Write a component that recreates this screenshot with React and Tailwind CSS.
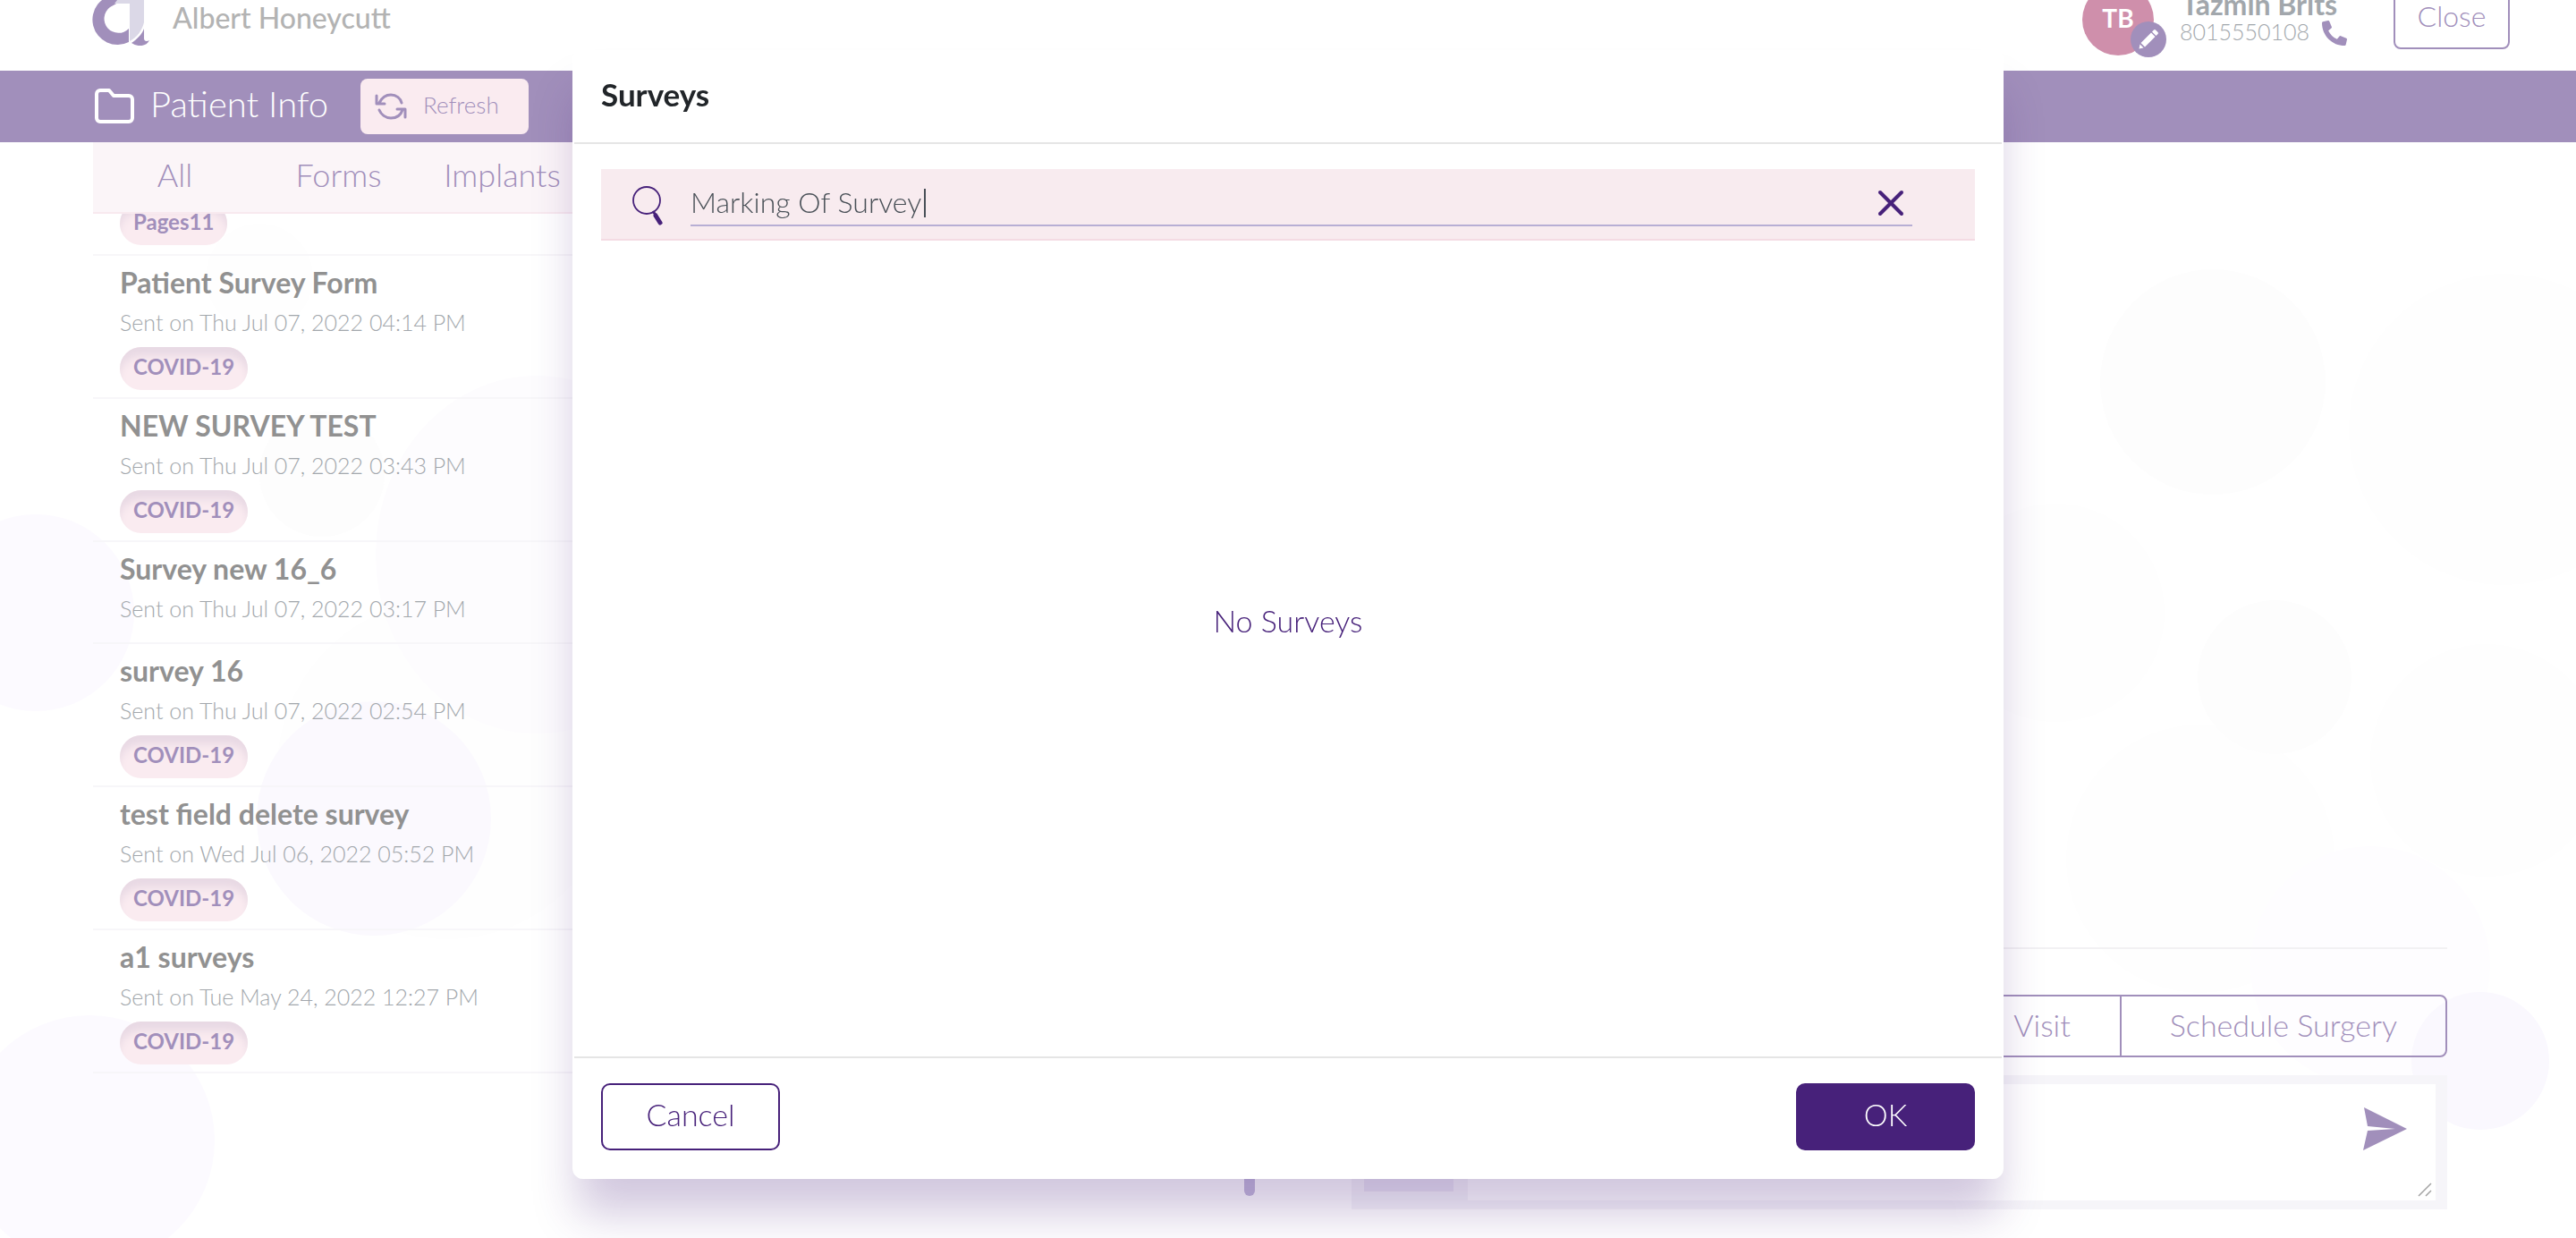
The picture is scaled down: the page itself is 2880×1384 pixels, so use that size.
import { X } from "lucide-react";
import { FaPhoneAlt } from "react-icons/fa";

const surveys = [
  { title: "Patient Survey Form", sent: "Sent on Thu Jul 07, 2022 04:14 PM", tag: "COVID-19" },
  { title: "NEW SURVEY TEST", sent: "Sent on Thu Jul 07, 2022 03:43 PM", tag: "COVID-19" },
  { title: "Survey new 16_6", sent: "Sent on Thu Jul 07, 2022 03:17 PM" },
  { title: "survey 16", sent: "Sent on Thu Jul 07, 2022 02:54 PM", tag: "COVID-19" },
  { title: "test field delete survey", sent: "Sent on Wed Jul 06, 2022 05:52 PM", tag: "COVID-19" },
  { title: "a1 surveys", sent: "Sent on Tue May 24, 2022 12:27 PM", tag: "COVID-19" },
];

function Backdrop() {
  return (
    <svg className="absolute inset-0 -z-10 h-full w-full" viewBox="0 0 2880 1384" preserveAspectRatio="xMidYMid slice" aria-hidden="true">
      <g fill="#fefefe">
        <circle cx="2800" cy="480" r="174" />
        <circle cx="2298" cy="685" r="122" />
        <circle cx="2460" cy="960" r="150" />
        <circle cx="2780" cy="850" r="130" />
        <circle cx="290" cy="310" r="60" />
        <circle cx="500" cy="860" r="190" />
      </g>
      <g fill="#fdfdfd">
        <circle cx="2474" cy="427" r="126" />
        <circle cx="2543" cy="757" r="86" />
        <circle cx="360" cy="530" r="70" />
      </g>
      <ellipse cx="600" cy="620" rx="180" ry="200" fill="#fdfcfe" />
      <circle cx="40" cy="685" r="110" fill="#fcfaff" />
      <circle cx="100" cy="1275" r="140" fill="#fcfaff" />
      <circle cx="418" cy="915" r="131" fill="#fbf9fe" />
      <circle cx="2650" cy="1080" r="134" fill="#fefdff" />
      <circle cx="2773" cy="1186" r="77" fill="#faf8fe" />
    </svg>
  );
}

function Logo() {
  return (
    <svg className="h-[76px] w-16" viewBox="0 0 64 76" role="img" aria-label="Logo">
      <path d="M38 19H28A28 28 0 1 0 41 72V57A16 16 0 1 1 20 33L29 28z" fill="#a18fbb" />
      <path d="M25 29 38 12 58 2v48c-2 9-8 17-16 21V29z" fill="#dbd8e7" />
      <path d="M58 57v11c0 3 3 4 6 2-3 7-13 8-20 3 6-4 12-10 14-16z" fill="#a18fbb" />
    </svg>
  );
}

function PencilIcon() {
  return (
    <svg className="size-[22px]" viewBox="0 0 22 22" fill="#fff" aria-hidden="true">
      <path d="M15 2.500 17 .500a1.500 1.500 0 0 1 2 0l2.500 2.500a1.500 1.500 0 0 1 0 2l-2 2zM14 3.500 18.500 8 7 19.500 2.500 15zM1.500 16.500 5.500 20.500 .500 21.500z" />
    </svg>
  );
}

function Pill({ children }) {
  return (
    <span className="inline-flex h-12 items-center rounded-full bg-[#faebf0] px-[15px] pb-1 text-[24px] font-bold text-[#a18fbb] shadow-[inset_0_12px_10px_-2px_#e8d9e4]">
      {children}
    </span>
  );
}

function Header() {
  return (
    <header className="flex h-[79px] items-end justify-between overflow-hidden pr-[74px] pl-[103px]">
      <div className="flex items-end gap-[26px]">
        <div className="pb-7">
          <Logo />
        </div>
        <p className="pb-[39px] text-[32px] leading-10 font-medium text-[#b3b3b3]">Albert Honeycutt</p>
      </div>
      <div className="flex items-end">
        <div className="relative mb-[17px] flex size-20 items-center justify-center rounded-full bg-[#cf8fab] pb-1 text-[28px] font-bold text-white">
          TB
          <button type="button" aria-label="Edit contact" className="absolute -right-3.5 -bottom-0.5 flex size-10 items-center justify-center rounded-full bg-[#a18fbb]">
            <PencilIcon />
          </button>
        </div>
        <div className="ml-[29px] pb-[26px] text-[#a2a7ac]">
          <p className="pl-0.5 text-[32px] leading-8 font-bold">Tazmin Brits</p>
          <p className="flex h-8 items-center gap-3.5 text-[25px] leading-8 font-light">
            <span className="pb-1">8015550108</span>
            <FaPhoneAlt className="size-7 text-[#a18fbb]" />
          </p>
        </div>
        <button type="button" className="mb-6 ml-[52px] h-[75px] w-[130px] rounded-lg border-2 border-[#a18fbb] text-[32px] font-light text-[#a18fbb]">
          Close
        </button>
      </div>
    </header>
  );
}

function TitleBar() {
  return (
    <div className="flex h-20 items-center bg-[#a18fbb] pl-[106px]">
      <svg className="h-10 w-[44px]" viewBox="0 0 44 40" fill="none" stroke="#fff" strokeWidth="4" strokeLinejoin="round" aria-hidden="true">
        <path d="M6 2h10l5 6h17a4 4 0 0 1 4 4v21a4 4 0 0 1-4 4H6a4 4 0 0 1-4-4V6a4 4 0 0 1 4-4z" />
      </svg>
      <h1 className="ml-[18px] pb-1.5 text-[40px] leading-12 font-light text-white">Patient Info</h1>
      <button type="button" className="ml-9 flex h-[62px] w-[188px] items-center rounded-lg bg-[#faebf0] pl-4 text-[26px] font-light text-[#a18fbb]">
        <svg className="h-[30px] w-9" viewBox="0 0 36 30" fill="none" stroke="currentColor" strokeWidth="3" strokeLinecap="round" strokeLinejoin="round" aria-hidden="true">
          <path d="M5 11C8 5 12 2 18 2c6 0 11 4 12 9M2 3v9h9M5 19c2 5 7 9 13 9 6 0 11-3 13-9M25 18h9v9" />
        </svg>
        <span className="ml-[18px] pb-1">Refresh</span>
      </button>
    </div>
  );
}

function SurveyList() {
  return (
    <section aria-label="Patient documents" className="flex min-w-0">
      <div className="min-w-0 flex-1">
        <nav className="flex h-20 items-center border-b-2 border-[#f8e9ef] bg-[#fbf5f8] pb-1.5 text-[36px] font-light text-[#a18fbb]">
          {["All", "Forms", "Implants"].map((tab) => (
            <button key={tab} type="button" className="w-[183px] text-center">
              {tab}
            </button>
          ))}
        </nav>
        <ul>
          <li className="flex h-[47px] items-end overflow-hidden border-b-2 border-[#f7f6f9] px-[30px] pb-2.5">
            <Pill>Pages11</Pill>
          </li>
          {surveys.map((s) => (
            <li key={s.title} className="min-h-[114px] border-b-2 border-[#f7f6f9] px-[30px] pt-2.5 pb-2">
              <h2 className="text-[32px] leading-10 font-bold text-[#919191]">{s.title}</h2>
              <p className="mt-2 text-[25px] leading-8 font-light text-[#a2a7ac]">{s.sent}</p>
              {s.tag && (
                <div className="mt-3 flex">
                  <Pill>{s.tag}</Pill>
                </div>
              )}
            </li>
          ))}
        </ul>
      </div>
      <div className="flex w-3 items-end pb-[47px]">
        <div className="h-96 w-3 rounded-full bg-[#c5bcdc]" />
      </div>
    </section>
  );
}

function Composer() {
  return (
    <section aria-label="Conversation" className="flex min-w-0 flex-col justify-end pb-8">
      <div className="border-t-2 border-[#f2f1f3]" />
      <div className="mt-[51px] flex h-[70px] self-end rounded-lg border-2 border-[#a18fbb] text-[34px] font-light text-[#a18fbb]">
        <button type="button" className="pr-[55px] pb-1 pl-[200px]">Visit</button>
        <button type="button" className="border-l-2 border-[#a18fbb] px-[54px] pb-1">Schedule Surgery</button>
      </div>
      <div className="mt-5 flex h-[150px] bg-[#f6f5f9] p-2.5 pr-[13px]">
        <div className="mb-2.5 ml-1 w-[100px] bg-[#eae6f2]" />
        <div className="relative ml-4 flex-1">
          <textarea aria-label="Message" className="block h-full w-full resize-none bg-white p-4 pr-28 text-[28px] font-light" />
          <button type="button" aria-label="Send message" className="absolute top-[25px] right-[31px] text-[#a18fbb]">
            <svg className="size-[50px]" viewBox="0 0 50 50" fill="currentColor" aria-hidden="true">
              <path d="M1 1l48 24L0 49l5-22 31-2-31-3z" />
            </svg>
          </button>
          <svg className="pointer-events-none absolute right-1 bottom-1 size-4" viewBox="0 0 16 16" fill="none" stroke="#a3a3a3" strokeWidth="1.5" aria-hidden="true">
            <path d="M1 15 15 1M9 15l6-6" />
          </svg>
        </div>
      </div>
    </section>
  );
}

function SurveyDialog() {
  return (
    <div className="fixed inset-0 flex justify-center">
      <div role="dialog" aria-modal="true" aria-labelledby="dialog-title" className="mt-14 mb-[66px] flex w-5/9 flex-col rounded-xl border-x-2 border-white bg-white shadow-[0_44px_50px_-6px_rgba(71,33,122,0.25)]">
        <header className="flex h-[105px] items-center border-b-2 border-[#e5e5e5] px-[30px] pb-1">
          <h2 id="dialog-title" className="text-[35px] font-bold text-[#212529]">Surveys</h2>
        </header>
        <div className="flex flex-1 flex-col px-[30px] pt-7">
          <div className="flex h-20 items-center border-b-2 border-[#f4dbe3] bg-[#f8ebef] pr-[70px] pl-[34px]">
            <svg className="mt-1 h-11 w-9" viewBox="0 0 36 44" fill="none" stroke="#47217a" aria-hidden="true">
              <circle cx="17" cy="16" r="15" strokeWidth="1.8" />
              <path d="M27 33l5 8" strokeWidth="5" strokeLinecap="round" />
              <path d="M24 28l4 6" strokeWidth="3" />
            </svg>
            <div className="relative ml-[30px] flex h-[50px] flex-1 items-center border-b-2 border-[#b7aed4]">
              <input
                aria-label="Search surveys"
                defaultValue="Marking Of Survey"
                className="h-full min-w-0 flex-1 bg-transparent pb-1 text-[32px] font-light text-[#495057] outline-none"
              />
              <span className="absolute left-[261px] h-8 w-0.5 bg-[#495057]" />
              <button type="button" aria-label="Clear search" className="text-[#47217a]">
                <X className="size-12 stroke-2" />
              </button>
            </div>
          </div>
          <div className="flex flex-1 items-center justify-center pb-16">
            <p className="text-[34px] font-light text-[#47217a]">No Surveys</p>
          </div>
        </div>
        <footer className="flex h-[137px] items-center justify-between border-t-2 border-[#e5e5e5] px-[30px] pb-1 text-[34px] font-light">
          <button type="button" className="h-[75px] w-[200px] rounded-[10px] border-2 border-[#47217a] pb-1.5 text-[#47217a]">Cancel</button>
          <button type="button" className="h-[75px] w-[200px] rounded-[10px] bg-[#47217a] pb-1.5 text-white">OK</button>
        </footer>
      </div>
    </div>
  );
}

export default function App() {
  return (
    <div className="relative isolate flex h-screen flex-col overflow-hidden bg-white font-['Lato','Open_Sans',sans-serif]">
      <Backdrop />
      <Header />
      <TitleBar />
      <main className="grid flex-1 grid-cols-[52fr_49fr] gap-27 pr-36 pl-26">
        <SurveyList />
        <Composer />
      </main>
      <SurveyDialog />
    </div>
  );
}
